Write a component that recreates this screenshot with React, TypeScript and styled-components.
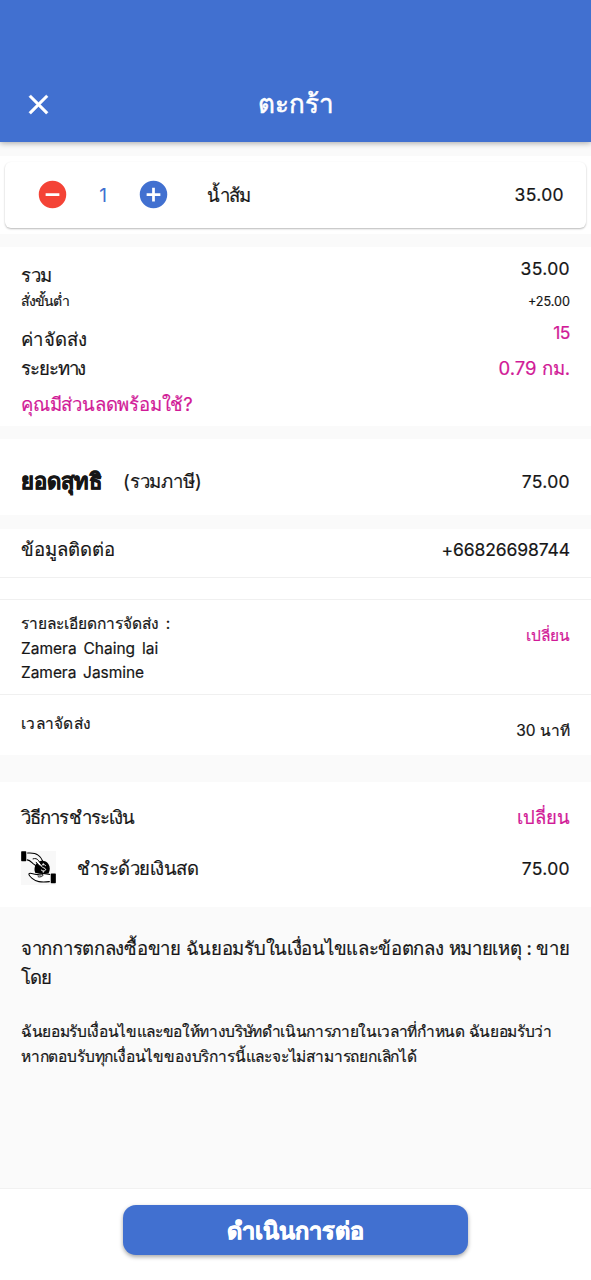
import React from 'react';
import styled, { createGlobalStyle } from 'styled-components';

const BLUE = '#4170d0';
const PINK = '#d11a97';
const INK = '#161616';
const GREY = '#fafafa';

const GlobalStyle = createGlobalStyle`
  * { box-sizing: border-box; }
  body {
    margin: 0;
    background: ${GREY};
    color: ${INK};
    font-family: Inter, sans-serif;
  }
`;

const Screen = styled.div`
  display: flex;
  flex-direction: column;
  height: 1280px;
  overflow: hidden;
`;

const Header = styled.header`
  flex: none;
  display: grid;
  grid-template-columns: 77px 1fr 77px;
  align-items: center;
  height: 142px;
  padding-top: 66px;
  background: ${BLUE};
  color: #fff;
  box-shadow: 0 1px 6px rgba(0, 0, 0, 0.35);
`;

const IconButton = styled.button`
  display: flex;
  justify-content: center;
  padding: 0;
  border: 0;
  background: none;
`;

const Icon = styled.svg<{ $color: string }>`
  display: block;
  flex: none;
  width: 33px;
  height: 33px;
  fill: ${(p) => p.$color};
`;

const CloseIcon = styled(Icon)`
  stroke: #fff;
  stroke-width: 0.3px;
`;

const Title = styled.h1`
  margin: 0;
  font-size: 26px;
  font-weight: 500;
  line-height: 34px;
  text-align: center;
  -webkit-text-stroke: 0.5px currentColor;
`;

const ItemArea = styled.section`
  flex: none;
  height: 78px;
  margin-top: 14px;
  padding: 6px 5px;
  background: #fff;
`;

const ItemCard = styled.div`
  display: flex;
  align-items: center;
  height: 66px;
  padding: 0 22px 1px 31px;
  border-radius: 6px;
  background: #fff;
  box-shadow: 0 1px 2px rgba(0, 0, 0, 0.28);
`;

const Quantity = styled.span`
  width: 68px;
  padding-top: 3px;
  font-size: 19px;
  line-height: 24px;
  text-align: center;
  color: ${BLUE};
`;

const ItemName = styled.div`
  flex: 1;
  padding-left: 37px;
`;

const Section = styled.section<{ $gap?: number }>`
  flex: none;
  margin-top: ${(p) => p.$gap ?? 13}px;
  background: #fff;
`;

const Row = styled.div<{ $h: number; $top?: number; $bottom?: number; $start?: boolean }>`
  display: flex;
  align-items: ${(p) => (p.$start ? 'flex-start' : 'center')};
  justify-content: space-between;
  height: ${(p) => p.$h}px;
  padding: ${(p) => p.$top ?? 0}px 21px ${(p) => p.$bottom ?? 0}px;
`;

const Divider = styled.div<{ $gap?: number }>`
  height: 1px;
  margin-top: ${(p) => p.$gap ?? 0}px;
  background: #f0f0f0;
`;

const Text = styled.span<{ $size?: number; $track?: number; $down?: number; $pink?: boolean }>`
  display: block;
  margin-top: ${(p) => p.$down ?? 0}px;
  font-size: ${(p) => p.$size ?? 18.5}px;
  line-height: 24px;
  letter-spacing: ${(p) => p.$track ?? 0}px;
  white-space: nowrap;
  color: ${(p) => (p.$pink ? PINK : INK)};
  -webkit-text-stroke: 0.2px currentColor;
`;

const Amount = styled(Text)`
  padding-top: 1px;
  font-size: ${(p) => p.$size ?? 17.5}px;
  letter-spacing: ${(p) => p.$track ?? 0.35}px;
`;

const Strong = styled(Text)`
  font-weight: 800;
  -webkit-text-stroke: 0.7px currentColor;
`;

const Group = styled.div`
  display: flex;
  align-items: center;
  gap: 21px;
`;

const Address = styled.div`
  word-spacing: 2.5px;
`;

const CashIcon = styled.svg`
  display: block;
  width: 35px;
  height: 34px;
  background: #f8f8f8;
`;

const Terms = styled.section`
  flex: 1;
  padding: 27px 21px 0;
`;

const Paragraph = styled.div<{ $line: number; $gap?: number }>`
  margin-top: ${(p) => p.$gap ?? 0}px;
  ${Text} { line-height: ${(p) => p.$line}px; }
`;

const BottomBar = styled.footer`
  flex: none;
  display: flex;
  justify-content: center;
  height: 92px;
  padding-top: 16px;
  border-top: 1px solid #f1f1f1;
  background: #fff;
`;

const PrimaryButton = styled.button`
  width: 345px;
  height: 50px;
  padding: 2px 0 0;
  border: 0;
  border-radius: 13px;
  background: ${BLUE};
  color: #fff;
  font-family: inherit;
  font-size: 23.5px;
  font-weight: 800;
  line-height: 30px;
  -webkit-text-stroke: 0.7px currentColor;
  box-shadow: 0 2px 4px rgba(0, 0, 0, 0.35);
`;

export default function App() {
  return (
    <>
      <GlobalStyle />
      <Screen>
        <Header>
          <IconButton aria-label="ปิด">
            <CloseIcon $color="#fff" viewBox="0 0 24 24">
              <path d="M19 6.41 17.59 5 12 10.59 6.41 5 5 6.41 10.59 12 5 17.59 6.41 19 12 13.41 17.59 19 19 17.59 13.41 12z" />
            </CloseIcon>
          </IconButton>
          <Title>ตะกร้า</Title>
        </Header>

        <ItemArea>
          <ItemCard>
            <Icon $color="#f44336" viewBox="0 0 24 24">
              <path d="M12 2a10 10 0 1 0 0 20 10 10 0 0 0 0-20zm5 11H7v-2h10z" />
            </Icon>
            <Quantity>1</Quantity>
            <Icon $color={BLUE} viewBox="0 0 24 24">
              <path d="M12 2a10 10 0 1 0 0 20 10 10 0 0 0 0-20zm5 11h-4v4h-2v-4H7v-2h4V7h2v4h4z" />
            </Icon>
            <ItemName>
              <Text $track={-0.8}>น้ำส้ม</Text>
            </ItemName>
            <Amount>35.00</Amount>
          </ItemCard>
        </ItemArea>

        <Section>
          <Row $h={41} $start>
            <Text $down={16} $track={-0.3}>รวม</Text>
            <Amount $down={9}>35.00</Amount>
          </Row>
          <Row $h={26}>
            <Text $size={14} $track={-1}>สั่งขั้นต่ำ</Text>
            <Amount $size={12.6} $track={0}>+25.00</Amount>
          </Row>
          <Row $h={41} $start>
            <Text $down={13} $track={0.3}>ค่าจัดส่ง</Text>
            <Amount $down={6} $track={-0.5} $pink>15</Amount>
          </Row>
          <Row $h={26}>
            <Text $track={-1.1}>ระยะทาง</Text>
            <Text $pink>0.79 กม.</Text>
          </Row>
          <Row $h={45} $start>
            <Text $down={11} $track={-0.2} $pink>คุณมีส่วนลดพร้อมใช้?</Text>
          </Row>
        </Section>

        <Section>
          <Row $h={76} $top={8}>
            <Group>
              <Strong $size={22}>ยอดสุทธิ</Strong>
              <Text $track={-0.1}>(รวมภาษี)</Text>
            </Group>
            <Amount>75.00</Amount>
          </Row>
        </Section>

        <Section $gap={14}>
          <Row $h={48} $bottom={8}>
            <Text>ข้อมูลติดต่อ</Text>
            <Amount $track={-0.1}>+66826698744</Amount>
          </Row>
          <Divider />
          <Divider $gap={21} />
          <Row $h={94} $start>
            <Address>
              <Text $size={15.5} $down={12}>รายละเอียดการจัดส่ง :</Text>
              <Text $size={15.5} $down={1}>Zamera Chaing lai</Text>
              <Text $size={15.5} $track={-0.05}>Zamera Jasmine</Text>
            </Address>
            <Text $size={15.5} $down={24} $pink>เปลี่ยน</Text>
          </Row>
          <Divider />
          <Row $h={60} $start>
            <Text $size={15.5} $down={17} $track={0.3}>เวลาจัดส่ง</Text>
            <Text $size={15.5} $down={24}>30 นาที</Text>
          </Row>
        </Section>

        <Section $gap={27}>
          <Row $h={61} $top={9}>
            <Text $track={-0.9}>วิธีการชำระเงิน</Text>
            <Text $pink>เปลี่ยน</Text>
          </Row>
          <Row $h={64} $bottom={14}>
            <Group>
              <CashIcon viewBox="33 36 102 100">
                <rect x="33" y="37" width="15" height="29" rx="2" />
                <path
                  d="M52 42c14-1 23 0 31 6 7 5 10 9 13 17M51 62c8 1 12 7 18 12l7 5"
                  fill="none" stroke="#000" strokeWidth="3.2" strokeLinecap="round"
                />
                <path d="M75 101c-5-9-3-23 6-31 10-9 25-7 32 4 6 9 5 19 1 27l-16 3z" />
                <path
                  d="M68 59c7-2 12 0 15 4l10 14c1 4-4 5-7 2l-9-10"
                  fill="#fff" stroke="#000" strokeWidth="2.8" strokeLinecap="round"
                />
                <path
                  d="M105 79c-4-6-14-3-12 2s11 4 12 9-9 7-13 2M98 73v4M98 95v4"
                  fill="none" stroke="#fff" strokeWidth="2.8" strokeLinecap="round"
                />
                <path
                  d="M117 105c-9-1-14-4-22-3-8 1-9 4-17 3-9 0-19-7-22-2-2 6 17 22 29 23 12 2 22 1 31 0"
                  fill="#fff" stroke="#000" strokeWidth="3.2" strokeLinecap="round"
                />
                <path d="M77 105c6 3 14 2 20 0 3 4-6 9-14 7" fill="none" stroke="#000" strokeWidth="2.6" strokeLinecap="round" />
                <rect x="120" y="102" width="15" height="29" rx="2" />
              </CashIcon>
              <Text $track={-0.55}>ชำระด้วยเงินสด</Text>
            </Group>
            <Amount>75.00</Amount>
          </Row>
        </Section>

        <Terms>
          <Paragraph $line={29}>
            <Text $track={-0.29}>จากการตกลงซื้อขาย ฉันยอมรับในเงื่อนไขและข้อตกลง หมายเหตุ : ขาย</Text>
            <Text $track={-1.2}>โดย</Text>
          </Paragraph>
          <Paragraph $line={25} $gap={27}>
            <Text $size={15.5} $track={-0.34}>ฉันยอมรับเงื่อนไขและขอให้ทางบริษัทดำเนินการภายในเวลาที่กำหนด ฉันยอมรับว่า</Text>
            <Text $size={15.5} $track={-0.18}>หากตอบรับทุกเงื่อนไขของบริการนี้และจะไม่สามารถยกเลิกได้</Text>
          </Paragraph>
        </Terms>

        <BottomBar>
          <PrimaryButton>ดำเนินการต่อ</PrimaryButton>
        </BottomBar>
      </Screen>
    </>
  );
}
